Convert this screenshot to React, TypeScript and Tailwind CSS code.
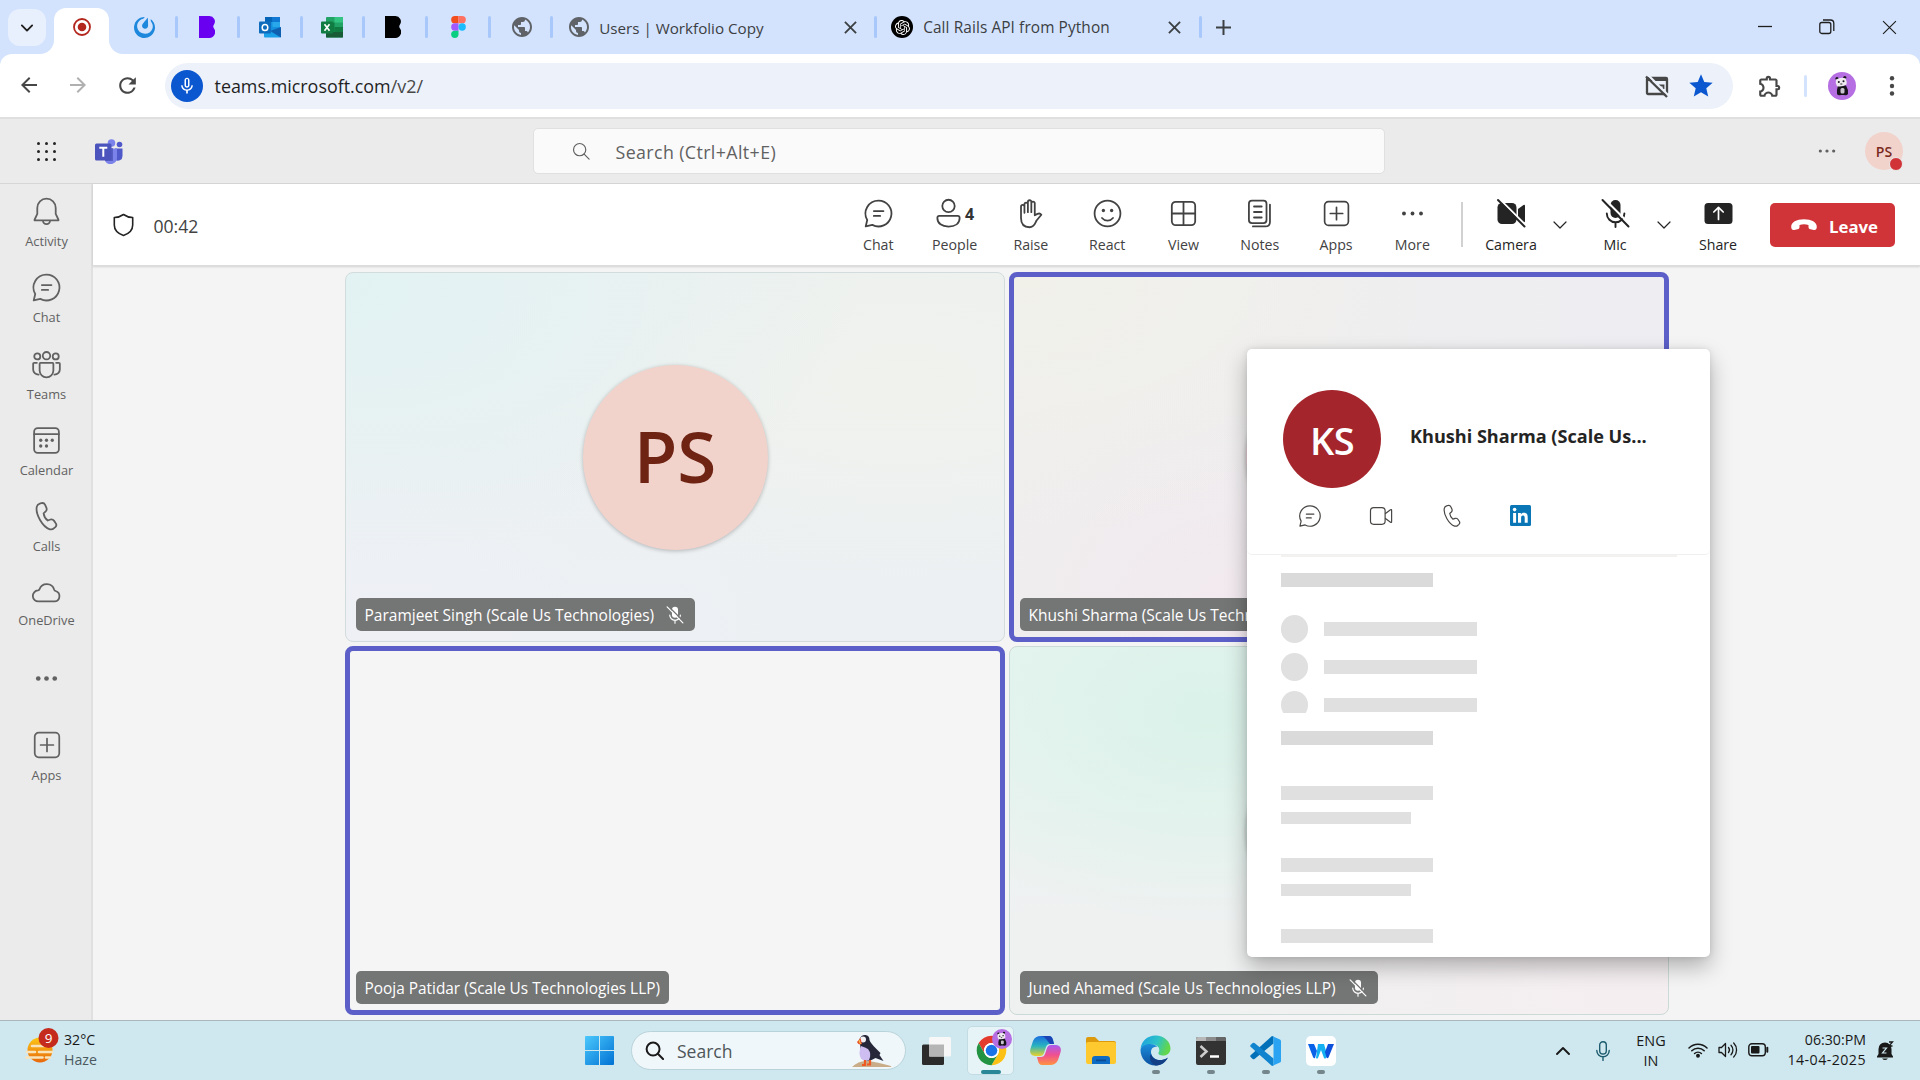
import React from "react";
import { MdPublic, MdStar, MdMicNone, MdOutlineExtension, MdArrowBack, MdArrowForward, MdRefresh } from "react-icons/md";
import { SiOpenai, SiMattermost } from "react-icons/si";

type SvgProps = { s?: number; sw?: number; className?: string; children?: React.ReactNode };

const Ico = ({ s = 33, sw = 1.3, className = "", children }: SvgProps) => (
  <svg width={s} height={s} viewBox="0 0 24 24" fill="none" stroke="currentColor" strokeWidth={sw} strokeLinecap="round" strokeLinejoin="round" className={"shrink-0 " + className}>
    {children}
  </svg>
);

const ChatIcon = (p: SvgProps) => (
  <Ico {...p}>
    <path d="M12 2.6a9.4 9.4 0 1 1-4.5 17.65L2.7 21.4l1.1-4.7A9.4 9.4 0 0 1 12 2.6ZM8.6 10.2h7M8.6 13.8h4.6" />
  </Ico>
);
const BellIcon = (p: SvgProps) => (
  <Ico {...p}>
    <path d="M12 2.7a6.7 6.7 0 0 0-6.7 6.7v4.4L3.3 18c-.2.3 0 .5.3.5h16.8c.3 0 .5-.2.3-.5l-2-4.2V9.4A6.7 6.7 0 0 0 12 2.7ZM9.4 18.6a2.6 2.6 0 0 0 5.2 0" />
  </Ico>
);
const TeamsIcon = (p: SvgProps) => (
  <Ico {...p}>
    <circle cx="12" cy="5.6" r="2.7" />
    <circle cx="5.3" cy="6.1" r="2.2" />
    <circle cx="18.7" cy="6.1" r="2.2" />
    <path d="M7.6 10.8h8.8c.4 0 .6.3.6.6v5a5 5 0 0 1-10 0v-5c0-.3.2-.6.6-.6ZM5 10.8H3c-.4 0-.7.3-.7.7v4.2c0 2 1.7 3.7 4 3.6M19 10.8h2c.4 0 .7.3.7.7v4.2c0 2-1.7 3.7-4 3.6" />
  </Ico>
);
const CalendarIcon = (p: SvgProps) => (
  <Ico {...p}>
    <rect x="3" y="3" width="18" height="18" rx="2.6" />
    <path d="M3 7.4h18" />
    <g fill="currentColor" stroke="none">
      <circle cx="7.8" cy="11.8" r="1.2" /><circle cx="12" cy="11.8" r="1.2" /><circle cx="16.2" cy="11.8" r="1.2" />
      <circle cx="7.8" cy="16" r="1.2" /><circle cx="12" cy="16" r="1.2" />
    </g>
  </Ico>
);
const PhoneIcon = (p: SvgProps) => (
  <Ico {...p}>
    <path d="M7.1 2.6l1.1-.3c1.1-.3 2.3.2 2.8 1.3l.9 2c.4.9.2 2-.5 2.7L9.9 9.7c.2 1.6 1.6 4.2 3 5.2l2-.7c.9-.3 1.9 0 2.5.8l1.2 1.7c.7.9.6 2.2-.2 3l-.9.8c-.8.8-2 1.1-3.1.8-2.6-.7-5-3.1-7.1-6.7-2.1-3.7-2.900-7-2.400-9.600.2-1.100 1-2.100 2.200-2.400z" />
  </Ico>
);
const CloudIcon = (p: SvgProps) => (
  <Ico {...p}>
    <path d="M6.3 18.5a4 4 0 0 1-.5-8c.7-.1.9-.2 1.1-.8a5.6 5.6 0 0 1 10.7.3c.2.6.3.8 1 .9a3.9 3.9 0 0 1-.5 7.6z" />
  </Ico>
);
const AppsIcon = (p: SvgProps) => (
  <Ico {...p}>
    <rect x="2.8" y="2.8" width="18.4" height="18.4" rx="3" />
    <path d="M12 7.2v9.6M7.2 12h9.6" />
  </Ico>
);
const DotsIcon = ({ s = 33, r = 1.7, gap = 6 }: { s?: number; r?: number; gap?: number }) => (
  <Ico s={s}>
    <g fill="currentColor" stroke="none">
      <circle cx={12 - gap} cy="12" r={r} /><circle cx="12" cy="12" r={r} /><circle cx={12 + gap} cy="12" r={r} />
    </g>
  </Ico>
);
const PersonIcon = (p: SvgProps) => (
  <Ico {...p}>
    <circle cx="12" cy="6.5" r="4.5" />
    <path d="M5.3 13.7h13.4c.8 0 1.4.7 1.4 1.5 0 4-3.3 6.3-8.1 6.3s-8.1-2.3-8.1-6.3c0-.8.6-1.5 1.4-1.5z" />
  </Ico>
);
const HandIcon = (p: SvgProps) => (
  <Ico {...p}>
    <path d="M7.600 11.500V5.300a1.250 1.250 0 0 1 2.500 0V11V3.600a1.250 1.250 0 0 1 2.500 0V11V4.600a1.250 1.250 0 0 1 2.500 0v8.700l2-1c1-.5 2.200-.2 2.800.6l-3.500 4.200c-1.100 1.800-1.500 4.900-5.100 4.900-3.900 0-6.200-2.500-6.200-6.700V7a1.250 1.250 0 0 1 2.500 0z" />
  </Ico>
);
const SmileIcon = (p: SvgProps) => (
  <Ico {...p}>
    <circle cx="12" cy="12" r="9.4" />
    <path d="M8 15.3c2 2.5 6 2.5 8 0" />
    <circle cx="9" cy="9.8" r="1.2" fill="currentColor" stroke="none" />
    <circle cx="15" cy="9.8" r="1.2" fill="currentColor" stroke="none" />
  </Ico>
);
const ViewIcon = (p: SvgProps) => (
  <Ico {...p}>
    <rect x="3.5" y="3.5" width="17" height="17" rx="2.8" />
    <path d="M12 3.5v17M3.5 12h17" />
  </Ico>
);
const NotesIcon = (p: SvgProps) => (
  <Ico {...p}>
    <rect x="4.3" y="2.7" width="12.8" height="16.3" rx="2.2" />
    <path d="M8 6.9h5.6M8 10.9h5.6M8 14.9h5.6M19.6 5.5v12.6c0 2-1.3 3.3-3.3 3.3H7.2" />
  </Ico>
);
const CameraOffIcon = () => (
  <svg width="33" height="33" viewBox="0 0 33 33" className="shrink-0">
    <rect x="2.5" y="6" width="19" height="21" rx="4.5" fill="#242424" />
    <path d="M23 12l5.500-4q1.500-.8 1.500 1v15q0 1.800-1.500 1L23 21z" fill="#242424" />
    <path d="M4.500 2l27 27" stroke="#fff" strokeWidth="2" />
    <path d="M3 3l26.500 26.500" stroke="#242424" strokeWidth="2" strokeLinecap="round" />
  </svg>
);
const MicOffIcon = ({ s = 33, bg = "#fff", fg = "#242424" }) => (
  <svg width={s} height={s} viewBox="0 0 33 33" fill="none" className="shrink-0">
    <rect x="11.5" y="3" width="10" height="18" rx="5" fill={fg} />
    <path d="M7.800 16.500a8.800 8.800 0 0 0 17.600 0M16.500 25.500V30" stroke={fg} strokeWidth="1.9" strokeLinecap="round" />
    <path d="M5.500 2l26 26" stroke={bg} strokeWidth="2.2" />
    <path d="M3.500 3L29.500 29.500" stroke={fg} strokeWidth="2" strokeLinecap="round" />
  </svg>
);
const ShareIcon = () => (
  <svg width="33" height="33" viewBox="0 0 33 33" fill="none" className="shrink-0">
    <rect x="2.5" y="6" width="28" height="21" rx="3.5" fill="#242424" />
    <path d="M16.500 22.500V10.500M11.800 15l4.700-4.700 4.700 4.700" stroke="#fff" strokeWidth="1.7" strokeLinecap="round" strokeLinejoin="round" />
  </svg>
);
const Chevron = ({ s = 14, up = false, sw = 1.2 }) => (
  <svg width={s} height={s} viewBox="0 0 14 14" fill="none" stroke="currentColor" strokeWidth={sw} strokeLinecap="round" strokeLinejoin="round">
    <path d={up ? "M1 10l6-6 6 6" : "M1 4l6 6 6-6"} />
  </svg>
);
const CloseIcon = ({ s = 13, sw = 2 }) => (
  <svg width={s} height={s} viewBox="0 0 14 14" fill="none" stroke="currentColor" strokeWidth={sw}>
    <path d="M1 1l12 12M13 1L1 13" />
  </svg>
);
const SearchIcon = ({ s = 20, sw = 1.5 }) => (
  <svg width={s} height={s} viewBox="0 0 20 20" fill="none" stroke="currentColor" strokeWidth={sw} strokeLinecap="round">
    <circle cx="8.5" cy="8.5" r="6.8" /><path d="M13.500 13.500L19 19" />
  </svg>
);

const BLogo = ({ color, className = "" }: { color: string; className?: string }) => (
  <svg className={className} width="16" height="22" viewBox="0 0 16 22"><path d="M0 0h10.500A5.500 5.500 0 0 1 15 8.500Q13.500 10.500 15 12.500A6 6 0 0 1 10.500 22H0z" fill={color} /></svg>
);
const OutlookLogo = () => (
  <svg width="22" height="21" viewBox="0 0 22 21">
    <rect x="6" y="0" width="15" height="14" fill="#1490df" /><rect x="6" y="0" width="7.5" height="5" fill="#0364b8" /><rect x="13.5" y="5" width="7.5" height="5" fill="#28a8ea" /><rect x="13.5" y="0" width="7.5" height="5" fill="#0f78d4" />
    <path d="M5 10l8.500 5L22 10v9.500q0 1-1 1H6q-1 0-1-1z" fill="#1aa0e8" /><path d="M22 10v10.500L11 14z" fill="#0f5fb0" />
    <rect x="0" y="4.5" width="12" height="12" rx="1" fill="#0f6cbd" /><ellipse cx="6" cy="10.5" rx="2.8" ry="3.1" fill="none" stroke="#fff" strokeWidth="1.5" />
  </svg>
);
const ExcelLogo = () => (
  <svg className="-ml-px" width="22" height="21" viewBox="0 0 22 21">
    <rect x="5" y="0" width="17" height="20.5" rx="1" fill="#21a366" /><rect x="13.5" y="0" width="8.5" height="5.5" fill="#33c481" /><rect x="5" y="5.5" width="8.5" height="9.5" fill="#107c41" /><rect x="5" y="15" width="17" height="5.5" fill="#185c37" /><rect x="13.5" y="10" width="8.5" height="5" fill="#107c41" />
    <rect x="0" y="4.5" width="12" height="12" rx="1" fill="#107c41" /><path d="M3.500 7.300l5 6.400M8.500 7.300l-5 6.400" stroke="#fff" strokeWidth="1.7" />
  </svg>
);
const FigmaLogo = () => (
  <svg className="ml-[2px]" width="15" height="22" viewBox="0 0 20 30">
    <path d="M5 0h5v10H5A5 5 0 0 1 5 0z" fill="#f24e1e" /><path d="M10 0h5a5 5 0 0 1 0 10h-5z" fill="#ff7262" /><path d="M5 10h5v10H5a5 5 0 0 1 0-10z" fill="#a259ff" /><circle cx="15" cy="15" r="5" fill="#1abcfe" /><path d="M5 20h5v5a5 5 0 1 1-5-5z" fill="#0acf83" />
  </svg>
);
const TeamsLogo = () => (
  <svg width="28" height="25" viewBox="0 0 28 25">
    <circle cx="16.5" cy="4" r="3.8" fill="#7b83eb" /><circle cx="24.5" cy="5.5" r="2.8" fill="#5059c9" />
    <path d="M20 9.500h7.500V17a4.500 4.500 0 0 1-7.500 3.500z" fill="#5059c9" />
    <path d="M10 9.500h12V18a6.500 6.500 0 0 1-12 4z" fill="#7b83eb" />
    <path d="M10 9h8v13h-8z" fill="#3f46a8" opacity=".6" />
    <rect x="0" y="4.5" width="16.5" height="17" rx="1.5" fill="#4b53bc" /><path d="M4.300 8.800h8M8.300 8.800v9" stroke="#fff" strokeWidth="2" />
  </svg>
);
const Panda = ({ s }: { s: number }) => (
  <svg width={s} height={s} viewBox="0 0 28 28">
    <circle cx="14" cy="14" r="14" fill="#b66fe2" />
    <path d="M10 13.500h8q2.500 4 2 8.500-1.500 2-4 1h-3q-3 1-4-1-.5-4 1-8.500z" fill="#16131a" /><rect x="12.5" y="16" width="4" height="5.5" rx="1.5" fill="#c9c4ce" />
    <circle cx="9" cy="6.5" r="1.6" fill="#16131a" /><circle cx="16.8" cy="5.5" r="1.6" fill="#16131a" />
    <path d="M8 7.500q5-3 9.500-1.200 1.700 3.500 1 6.200-4.500 2.800-9.500 1.700-2-2.700-1-6.700z" fill="#eeeaf0" /><circle cx="10.8" cy="10" r="1" fill="#16131a" /><circle cx="15.5" cy="9.3" r="1" fill="#16131a" /><path d="M12.300 12h2" stroke="#16131a" strokeWidth=".9" />
  </svg>
);

const Sep = () => <span className="h-[22px] w-[3px] shrink-0 rounded-full bg-[#a8c7fa]" />;

function TabStrip() {
  const pins = [
    <SiMattermost size={21} color="#1e88dc" />,
    <BLogo color="#6a00f0" />,
    <OutlookLogo />,
    <ExcelLogo />,
    <BLogo color="#000" className="-ml-[5px]" />,
    <FigmaLogo />,
    <MdPublic size={24} color="#5f6368" className="ml-[3px]" />,
  ];
  return (
    <div className="flex h-[54px] shrink-0 bg-[#d3e3fd] text-[#3c4043]">
      <div className="mt-[9px] ml-2 flex h-[37px] w-[38px] items-center justify-center rounded-xl bg-[#e9f0fd] text-[#1f1f1f]"><Chevron s={12} sw={2.2} /></div>
      <div className="relative mt-2 ml-[8px] flex w-[55px] justify-center rounded-t-xl bg-white pt-[10px]">
        <svg className="absolute bottom-0 -left-[14px]" width="14" height="14"><path d="M14 0v14H0A14 14 0 0 0 14 0z" fill="#fff" /></svg>
        <svg className="absolute -right-[14px] bottom-0" width="14" height="14"><path d="M0 0v14h14A14 14 0 0 1 0 0z" fill="#fff" /></svg>
        <svg width="18" height="18" viewBox="0 0 18 18"><circle cx="9" cy="9" r="8" fill="none" stroke="#b3261e" strokeWidth="1.8" /><circle cx="9" cy="9" r="4.3" fill="#b3261e" /></svg>
      </div>
      <div className="ml-[6px] flex items-center">
        {pins.map((p, i) => (
          <React.Fragment key={i}>
            <div className="flex w-[59.6px] justify-center">{p}</div>
            <Sep />
          </React.Fragment>
        ))}
        <div className="flex w-[321px] items-center pr-[17px] pl-[13.5px]">
          <MdPublic size={24} color="#5f6368" />
          <span className="mt-[2px] ml-[8.5px] flex-1 text-[15.2px] leading-5">Users | Workfolio Copy</span>
          <CloseIcon />
        </div>
        <Sep />
        <div className="flex w-[321.5px] items-center pr-[18px] pl-[14px]">
          <span className="flex size-[22px] items-center justify-center rounded-full bg-black"><SiOpenai size={15} color="#fff" /></span>
          <span className="mt-[2px] ml-[10px] flex-1 text-[15.4px] leading-5 tracking-[0.1px]">Call Rails API from Python</span>
          <CloseIcon />
        </div>
        <Sep />
        <svg className="ml-[14px]" width="15" height="15" viewBox="0 0 15 15" stroke="#3c4043" strokeWidth="2"><path d="M7.500 0v15M0 7.500h15" /></svg>
      </div>
      <div className="ml-auto flex items-center pr-[23px] text-[#1f1f1f]">
        <svg width="14" height="14" stroke="currentColor" strokeWidth="1.3"><path d="M0 6.500h14" /></svg>
        <svg className="ml-[47px]" width="16" height="16" fill="none" stroke="currentColor" strokeWidth="1.3"><rect x=".8" y="3.5" width="11" height="11" rx="2" /><path d="M4 1h7.500a3.300 3.300 0 0 1 3.300 3.300V12" /></svg>
        <span className="ml-[47px]"><CloseIcon s={15} sw={1.1} /></span>
      </div>
    </div>
  );
}

function AddressBar() {
  return (
    <div className="shrink-0 bg-[#d3e3fd]">
      <div className="flex h-[63px] items-center rounded-t-[12px] bg-white text-[#474747]">
        <div className="ml-[17px] flex gap-[25px]">
          <MdArrowBack size={24} /><MdArrowForward size={24} color="#b0b0b0" /><MdRefresh size={25} />
        </div>
        <div className="ml-[24.5px] flex h-[46px] w-[1568.5px] items-center rounded-full bg-[#ecf1fa] pl-[6px]">
          <span className="flex size-8 items-center justify-center rounded-full bg-[#0b57d0]"><MdMicNone size={20} color="#fff" /></span>
          <span className="mt-[2px] ml-3 text-[17.9px] text-[#1f1f1f]">teams.microsoft.com<span className="text-[#474747]">/v2/</span></span>
          <svg className="ml-auto" width="26" height="24" viewBox="0 0 26 24" fill="none" stroke="#474747" strokeWidth="2.3">
            <rect x="3" y="4" width="20" height="16" rx="1" /><path d="M4 5.500h19" strokeWidth="3" /><path d="M15 11.500h4.500v3.500" strokeWidth="1.8" />
            <path d="M4 1l21 21" stroke="#ecf1fa" /><path d="M2 2.500l21 20.500" />
          </svg>
          <MdStar className="mr-[18.5px] ml-[17px]" size={28} color="#0b57d0" />
        </div>
        <MdOutlineExtension className="ml-[23.5px]" size={26} />
        <span className="ml-[21px] h-[22px] w-[3px] rounded-full bg-[#d3e3fd]" />
        <span className="ml-[21px]"><Panda s={28} /></span>
        <svg className="ml-[33px]" width="6" height="20" fill="#474747"><circle cx="3" cy="2.3" r="2.2" /><circle cx="3" cy="10" r="2.2" /><circle cx="3" cy="17.5" r="2.2" /></svg>
      </div>
    </div>
  );
}

function TeamsHeader() {
  return (
    <div className="flex h-[67px] shrink-0 items-center border-t-2 border-b border-t-[#dfdfdf] border-b-[#d6d6d6] bg-[#ebebeb]">
      <div className="ml-[37px] grid grid-cols-3 gap-[5px]">
        {Array.from({ length: 9 }, (_, i) => <span key={i} className="size-[3px] rounded-full bg-[#242424]" />)}
      </div>
      <span className="ml-[39px]"><TeamsLogo /></span>
      <div className="ml-[410px] flex h-[46px] w-[852px] items-center rounded-[5px] border border-[#e0e0e0] bg-[#fafafa] pl-[38px] text-[#616161]">
        <SearchIcon s={18} sw={1.3} />
        <span className="mt-[2px] ml-[25.5px] text-[17.8px] tracking-[0.4px]">Search (Ctrl+Alt+E)</span>
      </div>
      <span className="mr-[22px] ml-auto text-[#616161]"><DotsIcon s={32} r={1.2} gap={5} /></span>
      <div className="relative mr-[17px] flex size-[38px] items-center justify-center rounded-full bg-[#f1d3cc] text-[14px] font-semibold text-[#7a2a1c]">
        PS
        <span className="absolute right-0 -bottom-[1px] size-[14px] rounded-full border border-[#ebebeb] bg-[#d13438]" />
      </div>
    </div>
  );
}

const rail: [string, React.ReactNode][] = [
  ["Activity", <BellIcon />],
  ["Chat", <ChatIcon />],
  ["Teams", <TeamsIcon />],
  ["Calendar", <CalendarIcon />],
  ["Calls", <PhoneIcon />],
];

const RailItem = ({ label, icon, h, gap = "mt-[4px]" }: { label: string; icon: React.ReactNode; h: string; gap?: string }) => (
  <div className={"flex flex-col items-center " + h}>
    {icon}
    <span className={"text-[12.8px] leading-[18px] " + gap}>{label}</span>
  </div>
);

function Rail() {
  return (
    <div className="flex w-[93px] shrink-0 flex-col items-center border-r-2 border-[#e0e0e0] bg-[#ebebeb] pt-[11px] pl-[2px] text-[#616161]">
      {rail.map(([label, icon]) => <RailItem key={label} label={label} icon={icon} h="h-[76.3px]" />)}
      <RailItem label="OneDrive" icon={<CloudIcon />} h="h-[75px]" gap="mt-[2px]" />
      <div className="mt-[10.5px]"><DotsIcon /></div>
      <div className="mt-[34px] flex flex-col items-center">
        <AppsIcon s={32} />
        <span className="mt-[5px] text-[12.8px] leading-[18px]">Apps</span>
      </div>
    </div>
  );
}

const Tool = ({ label, icon, w = "w-[76.3px]" }: { label: string; icon: React.ReactNode; w?: string }) => (
  <div className={"flex flex-col items-center pt-[2px] " + w}>
    <div className="flex h-[33px] items-center">{icon}</div>
    <span className="mt-[5px] text-[14.2px] leading-5">{label}</span>
  </div>
);

function MeetingBar() {
  return (
    <div className="z-10 flex h-[82px] shrink-0 items-center border-b border-[#dcdcdc] bg-white pr-[25px] text-[#424242] shadow-[0_1px_2px_rgba(0,0,0,0.14)]">
      <svg className="ml-5" width="21" height="24" viewBox="0 0 21 24" fill="none" stroke="#242424" strokeWidth="1.6" strokeLinejoin="round"><path d="M10.500 1.500C13 3.300 16 4.400 19.700 4.500V12c0 4.800-3.500 8.500-9.200 10.500C4.800 20.500 1.300 16.800 1.300 12V4.500C5 4.400 8 3.300 10.500 1.500z" /></svg>
      <span className="mt-[3px] ml-[19.5px] text-[17.6px]">00:42</span>
      <div className="ml-auto flex items-center">
        <Tool label="Chat" icon={<ChatIcon />} />
        <Tool label="People" icon={<span className="mr-[4px] flex items-center"><PersonIcon /><b className="mt-[2px] w-2 text-[16px] font-bold text-[#333]">4</b></span>} />
        <Tool label="Raise" icon={<HandIcon />} />
        <Tool label="React" icon={<SmileIcon />} />
        <Tool label="View" icon={<ViewIcon />} />
        <Tool label="Notes" icon={<NotesIcon />} />
        <Tool label="Apps" icon={<AppsIcon s={31} />} />
        <Tool label="More" icon={<DotsIcon r={1.4} gap={6.2} />} />
        <span className="mr-[13px] ml-[10.5px] h-[45px] w-[2px] bg-[#d1d1d1]" />
        <div className="flex items-center text-[#242424]">
          <Tool label="Camera" w="w-[70px]" icon={<CameraOffIcon />} />
          <div className="mr-[7.5px] flex w-[28.5px] justify-center"><Chevron /></div>
          <Tool label="Mic" w="w-[66px]" icon={<MicOffIcon />} />
          <div className="flex w-[32px] justify-center"><Chevron /></div>
          <Tool label="Share" w="w-[76px]" icon={<ShareIcon />} />
        </div>
        <div className="ml-[14px] flex h-11 w-[125px] items-center rounded-[5px] bg-[#d13438] pl-[21px] text-[16.8px] font-bold text-white">
          <svg className="mt-px mr-[12px]" width="26" height="12" viewBox="0 0 26 12" fill="#fff"><path d="M13 .3C20.500.3 26 3.300 25.800 8c-.1 2.300-1.200 3.300-3 2.900l-3.300-.7c-1.500-.3-2-1.200-2-2.500V6q-4.500-1.400-9 0v1.700c0 1.300-.5 2.200-2 2.500l-3.300.7C1.400 11.300.3 10.300.2 8 0 3.300 5.500.3 13 .3z" /></svg>
          <span className="mt-[4px]">Leave</span>
        </div>
      </div>
    </div>
  );
}

const Pill = ({ name, muted = false, w, fit = "text-[15.5px]" }: { name: string; muted?: boolean; w: string; fit?: string }) => (
  <div className={"flex h-[33px] items-center rounded-[5px] bg-[#747575] pl-[8.5px] whitespace-nowrap text-white " + w + " " + fit}>
    <span className="mt-[3px] flex-1">{name}</span>
    {muted && <span className="mr-[10px]"><MicOffIcon s={20} bg="#747575" fg="#fff" /></span>}
  </div>
);

function Stage() {
  return (
    <div className="grid flex-1 grid-cols-[660px_660px] grid-rows-[370px_369px] gap-[4px] bg-[#f4f4f4] pt-[6px] pl-[252px]">
      <div className="flex flex-col rounded-lg border border-[#d3dcdd] bg-[radial-gradient(ellipse_at_0%_5%,#e2f2f3_0%,transparent_55%),radial-gradient(ellipse_at_85%_30%,#f0f2ed_0%,transparent_55%),radial-gradient(ellipse_at_5%_100%,#eef0f5_0%,transparent_50%),linear-gradient(#ecf1f0,#ecf0f3)] pl-[10px]">
        <div className="mt-[91.5px] ml-[226.5px] flex size-[185px] items-center justify-center rounded-full bg-[#f1d3cc] text-[71px] font-semibold text-[#6e2313] shadow-[0_1px_4px_rgba(0,0,0,0.25)]"><span className="-mt-px">PS</span></div>
        <div className="mt-auto mb-[10px]"><Pill name="Paramjeet Singh (Scale Us Technologies)" muted w="w-[339px]" /></div>
      </div>
      <div className="flex flex-col rounded-lg border-[5px] border-[#5b5fc7] bg-[radial-gradient(ellipse_at_0%_0%,#f1f1ea_0%,transparent_50%),radial-gradient(ellipse_at_35%_95%,#f2e9ef_0%,transparent_45%),linear-gradient(90deg,#efeeee,#eeedf1)] pl-[6px]">
        <div className="mt-[87px] ml-[226px] size-[186px] rounded-full bg-[#e8cfd8] shadow-[0_1px_4px_rgba(0,0,0,0.25)]" />
        <div className="mt-auto mb-[6px]"><Pill name="Khushi Sharma (Scale Us Technologies)" muted w="w-[330px]" /></div>
      </div>
      <div className="flex flex-col rounded-lg border-[5px] border-[#5b5fc7] bg-[#f5f5f5] pl-[6px]">
        <div className="mt-auto mb-[6px]"><Pill name="Pooja Patidar (Scale Us Technologies LLP)" w="w-[313px]" fit="text-[15.4px]" /></div>
      </div>
      <div className="flex flex-col rounded-lg border border-[#cbdad6] bg-[radial-gradient(ellipse_at_30%_18%,#daf2e9_0%,transparent_50%),radial-gradient(ellipse_at_95%_95%,#f5eef1_0%,transparent_50%),linear-gradient(#e8f4f0_10%,#eff1f1_75%)] pl-[10px]">
        <div className="mt-[91px] ml-[226px] size-[186px] rounded-full bg-[#cfe0da] shadow-[0_1px_4px_rgba(0,0,0,0.25)]" />
        <div className="mt-auto mb-[10px]"><Pill name="Juned Ahamed (Scale Us Technologies LLP)" muted w="w-[358px]" /></div>
      </div>
    </div>
  );
}

function ProfileCard() {
  return (
    <div className="absolute top-[349px] left-[1247px] z-20 h-[608px] w-[463px] rounded-[5px] bg-white shadow-[0_10px_22px_rgba(0,0,0,0.28),0_0_6px_rgba(0,0,0,0.10)]">
      <div className="h-[206px] rounded-[5px] border-b border-[#f0f0f0] pt-[41px]">
        <div className="flex items-center pl-9">
          <div className="flex size-[98px] items-center justify-center rounded-full bg-[#a4262c] text-[38px] font-semibold tracking-[-0.5px] text-white"><span className="mt-[2px]">KS</span></div>
          <span className="-mt-[4px] ml-[29px] text-[18.1px] font-bold text-[#242424]">Khushi Sharma (Scale Us...</span>
        </div>
        <div className="mt-[15px] flex items-center pl-[50px] text-[#484644]">
          <ChatIcon s={26} sw={1.1} />
          <svg className="ml-[45px]" width="26" height="26" viewBox="0 0 24 24" fill="none" stroke="currentColor" strokeWidth="1.1" strokeLinejoin="round"><rect x="2.3" y="4.2" width="13.5" height="15.5" rx="3" /><path d="M15.800 10l5-3.800q1-.6 1 .5v10.600q0 1.100-1 .5l-5-3.800" /></svg>
          <PhoneIcon s={26} sw={1.1} className="ml-[45px]" />
          <svg className="-mt-px ml-[44.5px]" width="21" height="21" viewBox="0 0 21 21" fill="#fff"><rect width="21" height="21" rx="1.5" fill="#0a76b5" /><circle cx="4.6" cy="4.6" r="1.8" /><path d="M3.100 8h3v9.800h-3zM8 8h2.900v1.400c.5-.9 1.500-1.600 3-1.600 3.100 0 3.800 2 3.800 4.700v5.300h-3v-4.700c0-1.200 0-2.700-1.700-2.700s-1.900 1.300-1.900 2.600v4.800H8z" /></svg>
        </div>
      </div>
      <div className="flex flex-col px-[34px]">
        <span className="h-[2px] w-[396px] bg-[#f3f2f1]" />
        <span className="mt-4 h-[14px] w-[152px] bg-[#dadada]" />
        <div className="mt-7 flex h-[98px] flex-col gap-[10px] overflow-hidden">
          {[0, 1, 2].map((i) => (
            <div key={i} className="flex shrink-0 items-center"><span className="h-7 w-[27px] rounded-full bg-[#e0e0e0]" /><span className="ml-[16px] h-[14px] w-[153px] bg-[#e0e0e0]" /></div>
          ))}
        </div>
        <span className="mt-[18px] h-[14px] w-[152px] bg-[#dadada]" />
        <span className="mt-[41px] h-[14px] w-[152px] bg-[#e0e0e0]" />
        <span className="mt-3 h-[12px] w-[130px] bg-[#e0e0e0]" />
        <span className="mt-[34px] h-[14px] w-[152px] bg-[#e0e0e0]" />
        <span className="mt-3 h-[12px] w-[130px] bg-[#e0e0e0]" />
        <span className="mt-[33px] h-[14px] w-[152px] bg-[#e0e0e0]" />
      </div>
    </div>
  );
}

const Weather = () => (
  <svg width="36" height="46" viewBox="0 0 36 46">
    <defs><linearGradient id="sun" x1="0" y1="0" x2="0" y2="1"><stop offset="0" stopColor="#fcc817" /><stop offset="1" stopColor="#e8670c" /></linearGradient></defs>
    <circle cx="15" cy="22" r="12.5" fill="url(#sun)" />
    <g stroke="#f8e3ba" strokeWidth="2.6" strokeLinecap="round"><path d="M7 18h12M2 24h8M14 24h13M1.500 29.500h16M21 29.500h4" /></g>
    <circle cx="23.5" cy="10" r="10" fill="#c42b1c" />
    <text x="23.5" y="14.8" textAnchor="middle" fontSize="13.5" fill="#fff">9</text>
  </svg>
);
const Puffin = () => (
  <svg width="42" height="34" viewBox="0 0 42 34">
    <path d="M1 33q7-7 16-6t23 5q1 1-1 1z" fill="#c9ad88" />
    <path d="M8.500 5q2-4.500 6-4 4 .5 4 5 1 3 6 8l5 5-1 2 4 6-8-3q-6 4-11 2-5-3-4-12z" fill="#26283a" />
    <path d="M10 12q-3 7 0 12.500 3 3.500 8 1.500 3-6-1-11-4-2-7-3z" fill="#cdbdf0" />
    <circle cx="12" cy="5.5" r="3" fill="#f4f1f5" /><path d="M9.500 4L6 8q1 3.500 5 2z" fill="#e8532b" /><path d="M8 6l1.500 4" stroke="#f7c748" />
    <path d="M14 26v5h-3M19 26v4.500h-3" stroke="#ef5a24" strokeWidth="2.2" fill="none" />
  </svg>
);
const ChromeLogo = () => (
  <svg width="31" height="31" viewBox="0 0 48 48">
    <circle cx="24" cy="24" r="23" fill="#fff" />
    <path d="M4.100 12.500A23 23 0 0 1 43.900 12.500H24A11.500 11.500 0 0 0 14 29.700z" fill="#e33b2e" />
    <path d="M43.900 12.500A23 23 0 0 1 24 47l10-17.300A11.500 11.500 0 0 0 24 12.500z" fill="#fbc116" />
    <path d="M24 47A23 23 0 0 1 4.100 12.500L14 29.700a11.500 11.500 0 0 0 20 0z" fill="#229342" />
    <circle cx="24" cy="24" r="11.5" fill="#fff" /><circle cx="24" cy="24" r="9" fill="#1a73e8" />
  </svg>
);
const CopilotLogo = () => (
  <svg width="31" height="29" viewBox="0 0 31 29">
    <defs>
      <linearGradient id="cpa" x1="0" y1="0" x2="0" y2="1"><stop offset="0" stopColor="#1a6de0" /><stop offset=".5" stopColor="#2ab4c0" /><stop offset="1" stopColor="#e9d22a" /></linearGradient>
      <linearGradient id="cpb" x1="0" y1="0" x2="0" y2="1"><stop offset="0" stopColor="#a95cf0" /><stop offset=".5" stopColor="#f0508f" /><stop offset="1" stopColor="#ff9440" /></linearGradient>
    </defs>
    <path d="M11 0h8q3 0 4 4l1 4h-4q-3 0-4 3l-2 6q-1 3-4 3H5q-7-1-4-9l2-6q2-5 8-5z" fill="url(#cpa)" />
    <path d="M20 29h-8q-3 0-4-4l-1-4h4q3 0 4-3l2-6q1-3 4-3h5q7 1 4 9l-2 6q-2 5-8 5z" fill="url(#cpb)" />
    <path d="M11 0h8q3 0 4 4l1 4h-4L16 3q-2-3-5-3z" fill="#1b45b5" />
  </svg>
);
const ExplorerLogo = () => (
  <svg width="30" height="28" viewBox="0 0 30 28">
    <path d="M0 2q0-2 2-2h7l4 4h15q2 0 2 2v4H0z" fill="#dd9a0c" /><rect y="5" width="30" height="22" rx="2" fill="#fdc92f" />
    <path d="M6 27v-5q0-3 3-3h12q3 0 3 3v5z" fill="#0f6cc4" /><rect x="10" y="22.5" width="10" height="1.8" fill="#0a4c94" />
  </svg>
);
const EdgeLogo = () => (
  <svg width="31" height="31" viewBox="0 0 31 31">
    <defs>
      <linearGradient id="eg1" x1="0" y1="0" x2="1" y2=".3"><stop offset="0" stopColor="#1b9de2" /><stop offset=".6" stopColor="#2dc3c8" /><stop offset="1" stopColor="#62d64c" /></linearGradient>
      <linearGradient id="eg2" x1="0" y1="0" x2="0" y2="1"><stop offset="0" stopColor="#1b8fdc" /><stop offset="1" stopColor="#0c4fa0" /></linearGradient>
    </defs>
    <path d="M.5 14C1.500 5.500 8 .5 15.500.5 24 .5 30.500 6.500 30.500 13.500c0 4.500-3.500 7-7 7-4 0-5.500-1.500-5-2.800 2-2.700.5-8.200-6-8.200C6 9.500.5 12 .5 14z" fill="url(#eg1)" />
    <path d="M.5 15c0-3.500 5-6 9.500-6 3 0 6 1 7.500 3-5-1-7.500 3-6 7.500 1.800 5.500 9.500 7.500 16 3.500C25 28 20.500 30.500 15.500 30.500 6.500 30.500.5 23 .5 15z" fill="url(#eg2)" />
    <path d="M11 19c1.500 6 9.500 8.500 17 3.500-2.500 5-7 8-12.500 8C10 28 8.500 22 11 19z" fill="#123f86" />
  </svg>
);
const TerminalLogo = () => (
  <svg width="30" height="28" viewBox="0 0 30 28">
    <rect width="30" height="28" rx="2" fill="#333" /><path d="M0 4V2q0-2 2-2h8v4z" fill="#b8b8b8" /><path d="M10 0h10v4H10z" fill="#8c8c8c" /><path d="M20 0h8q2 0 2 2v2H20z" fill="#666" />
    <path d="M4.500 9l6 5.500-6 5.500" fill="none" stroke="#ccc" strokeWidth="2.5" /><path d="M14 19.500h9" stroke="#fff" strokeWidth="2.5" />
  </svg>
);
const VsCodeLogo = () => (
  <svg width="31" height="30" viewBox="0 0 31 30">
    <path d="M22 0l1.500.5v7L4.500 23q-1 .5-1.800 0L.6 21q-.8-1 0-1.800z" fill="#0070b8" />
    <path d="M22 30l1.500-.5v-7L4.500 7q-1-.5-1.800 0L.6 9q-.8 1 0 1.800z" fill="#1084cf" />
    <path d="M22 0l8 3.500q1 .5 1 1.500v20q0 1-1 1.500L22 30q1.500-.8 1.500-2.500v-25Q23.500.8 22 0z" fill="#2aa3f2" />
  </svg>
);

function TaskIcon({ children, dot = true }: { children: React.ReactNode; dot?: boolean }) {
  return (
    <div className="relative flex h-[59px] w-[55px] items-center justify-center">
      {children}
      {dot && <span className="absolute bottom-[6px] h-[4px] w-2 rounded-full bg-[#74868c]" />}
    </div>
  );
}

function Taskbar() {
  return (
    <div className="flex h-[60px] shrink-0 items-center border-t border-[#a9b6bb] bg-[#cfe8ef] text-[#191919]">
      <div className="flex w-[585px] items-center pl-[25px]">
        <Weather />
        <div className="-mt-[2px] ml-[3px] flex flex-col text-[14.2px] leading-5"><span>32°C</span><span className="text-[#4b5a5f]">Haze</span></div>
      </div>
      <svg width="29" height="29" viewBox="0 0 29 29">
        <defs><linearGradient id="win" x1="0" y1="0" x2="1" y2="1"><stop offset="0" stopColor="#4cc8fc" /><stop offset="1" stopColor="#0072d4" /></linearGradient></defs>
        <path d="M1 0h13v14H0V1q0-1 1-1zM15 0h13q1 0 1 1v13H15zM0 15h14v14H1q-1 0-1-1zM15 15h14v13q0 1-1 1H15z" fill="url(#win)" />
      </svg>
      <div className="ml-[17px] flex h-[39px] w-[275px] items-center rounded-full border border-[#b9d3da] bg-[#f0f7fa] pl-[13px] text-[#1a1a1a]">
        <SearchIcon s={19} sw={2.1} />
        <span className="mt-px ml-[13px] text-[17.5px] text-[#4d5558]">Search</span>
        <span className="mr-[12px] ml-auto"><Puffin /></span>
      </div>
      <div className="flex w-[61px] items-center justify-center">
        <svg width="29" height="28" viewBox="0 0 29 28"><rect y="7.5" width="22" height="20.5" rx="1.5" fill="#2b2b2b" /><rect x="7" y="0" width="22" height="19.5" rx="1.5" fill="#f7f7f7" /><rect x="7" y="7.5" width="15" height="12" fill="#b5b5b5" /></svg>
      </div>
      <div className="relative flex h-[49px] w-[47px] items-center justify-center rounded-[5px] border border-[#c3dce3] bg-[#e6f4f8]">
        <span className="ml-px"><ChromeLogo /></span>
        <span className="absolute top-[2px] right-[1px]"><Panda s={20} /></span>
        <span className="absolute bottom-0 h-[4px] w-5 rounded-full bg-[#2a8797]" />
      </div>
      <div className="ml-[4px] flex">
        <TaskIcon dot={false}><CopilotLogo /></TaskIcon>
        <TaskIcon dot={false}><ExplorerLogo /></TaskIcon>
        <TaskIcon><EdgeLogo /></TaskIcon>
        <TaskIcon><TerminalLogo /></TaskIcon>
        <TaskIcon><VsCodeLogo /></TaskIcon>
        <TaskIcon>
          <svg width="30" height="30" viewBox="0 0 30 30"><rect width="30" height="30" rx="5" fill="#fff" /><path d="M2 8h6l3 7-2 7q-1 1-2-1z" fill="#0a62e8" /><path d="M12 8h6l3.500 12-1.500 2q-1 1-2 0L15 14l-3 8q-1 1-2 0z" fill="#13b1f2" /><path d="M22 8h6l-5.500 13.500q-1 1.500-2 0L19 16z" fill="#0d50dc" /></svg>
        </TaskIcon>
      </div>
      <div className="ml-auto flex items-center">
        <Chevron up sw={1.9} />
        <svg className="ml-[26px]" width="14" height="20" viewBox="0 0 14 20" fill="none" stroke="#1c5c6e" strokeWidth="1.4" strokeLinecap="round"><rect x="3.7" y=".8" width="6.6" height="12.2" rx="3.3" /><path d="M.8 9.500a6.200 6.200 0 0 0 12.400 0M7 16v3.500" /></svg>
        <div className="ml-[21px] flex w-[40px] flex-col items-center text-[14.4px] leading-5"><span>ENG</span><span>IN</span></div>
        <svg className="-mt-px ml-[17px]" width="20" height="16" viewBox="0 0 20 16" fill="none" stroke="currentColor" strokeWidth="1.5" strokeLinecap="round"><path d="M1 6a12.500 12.500 0 0 1 18 0M3.800 8.800a8.700 8.700 0 0 1 12.400 0M6.600 11.500a4.900 4.900 0 0 1 6.800 0" /><circle cx="10" cy="13.8" r="1.2" fill="currentColor" /></svg>
        <svg className="-mt-px ml-[10px]" width="20" height="18" viewBox="0 0 20 18" fill="none" stroke="currentColor" strokeWidth="1.3" strokeLinecap="round" strokeLinejoin="round"><path d="M1 6.500h2.500l4-4v13l-4-4H1zM10.500 6.500a4 4 0 0 1 0 5M13 4.200a7 7 0 0 1 0 9.600M15.700 2a10 10 0 0 1 0 14" /></svg>
        <svg className="-mt-px ml-[10px]" width="21" height="14" viewBox="0 0 21 14" fill="none" stroke="currentColor" strokeWidth="1.4"><rect x=".8" y=".8" width="16.5" height="12" rx="3" /><rect x="3" y="3" width="8.5" height="7.6" rx="1" fill="currentColor" stroke="none" /><path d="M19.300 4.800v4" strokeWidth="2" strokeLinecap="round" /></svg>
        <div className="-mt-[2px] ml-[17px] flex w-[80px] flex-col items-end text-[14.2px] leading-5"><span>06:30:PM</span><span className="tracking-[0.45px]">14-04-2025</span></div>
        <svg className="mr-[26px] ml-[10px]" width="18" height="20" viewBox="0 0 18 20"><path d="M1 16.500v-1L2.500 13V8Q3 1.500 9 1.500 15 2 15.500 8v5l1.500 2.500v1zM6 17.500h6q-3 3-6 0z" fill="#191919" /><path d="M6.500 7h4l-4 5h4" stroke="#cfe8ef" strokeWidth="1.2" fill="none" /><path d="M13 1h3.500L13 5h3.500" stroke="#191919" strokeWidth="1.3" fill="none" /></svg>
      </div>
    </div>
  );
}

export default function App() {
  return (
    <div className="relative flex h-[1080px] w-[1920px] flex-col overflow-hidden bg-[#f4f4f4] font-['Open_Sans',sans-serif]">
      <TabStrip />
      <AddressBar />
      <TeamsHeader />
      <div className="flex min-h-0 flex-1">
        <Rail />
        <div className="flex flex-1 flex-col">
          <MeetingBar />
          <Stage />
        </div>
      </div>
      <ProfileCard />
      <Taskbar />
    </div>
  );
}
